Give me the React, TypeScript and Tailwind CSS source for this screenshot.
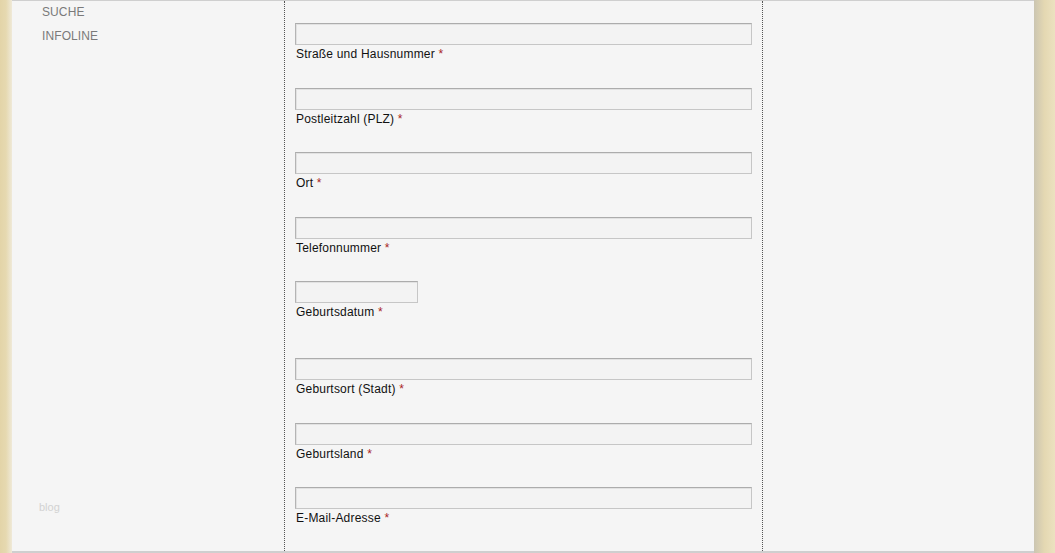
import React from "react";

type Field = { label: string; wrap: string; input: string };

const fields: Field[] = [
  { label: "Straße und Hausnummer", wrap: "mt-0", input: "w-[457px]" },
  { label: "Postleitzahl (PLZ)", wrap: "mt-[27px]", input: "w-[457px]" },
  { label: "Ort", wrap: "mt-[26px]", input: "w-[457px]" },
  { label: "Telefonnummer", wrap: "mt-[27px]", input: "w-[457px]" },
  { label: "Geburtsdatum", wrap: "mt-[26px]", input: "w-[123px]" },
  { label: "Geburtsort (Stadt)", wrap: "mt-[39px]", input: "w-[457px]" },
  { label: "Geburtsland", wrap: "mt-[27px]", input: "w-[457px]" },
  { label: "E-Mail-Adresse", wrap: "mt-[26px]", input: "w-[457px]" },
];

export default function App() {
  return (
    <div
      className="flex h-[553px] w-full overflow-hidden bg-[#e8dcb6]"
      style={{ fontFamily: '"Liberation Sans", Arial, sans-serif' }}
    >
      <div className="w-[12px] shrink-0 bg-gradient-to-r from-[#e3d4a8] via-[#e6d9b0] to-[#efe9d8]" />
      <div className="flex flex-1 border-t border-b-2 border-[#cfcfcf] bg-[#f5f5f5]">
        <div className="flex w-[272px] shrink-0 flex-col">
          <nav className="-mt-[1px] flex flex-col pl-[30px] text-[12px] leading-[24px] tracking-[0.1px] text-[#7a7a7a]">
            <span>SUCHE</span>
            <span>INFOLINE</span>
          </nav>
          <div className="mt-auto mb-[37px] pl-[27px] text-[11px] leading-[13px] text-[#d2d2d2]">
            blog
          </div>
        </div>
        <div className="w-[479px] shrink-0 border-x border-dotted border-[#555555] px-[10px] pt-[22px]">
          {fields.map((f) => (
            <div key={f.label} className={f.wrap}>
              <input
                type="text"
                className={`block h-[22px] ${f.input} border border-[#c6c6c6] border-t-[#acacac] border-l-[#b4b4b4] bg-[#f3f3f3] shadow-[inset_1px_1px_0_#e2e2e2] outline-none`}
              />
              <div className="mt-[2px] pl-[1px] text-[12px] leading-[14px] tracking-[0.2px] text-[#111111]">
                {f.label} <span className="text-[#a82424]">*</span>
              </div>
            </div>
          ))}
        </div>
        <div className="flex-1" />
      </div>
      <div className="w-[21px] shrink-0 bg-gradient-to-r from-[#cbc5b1] via-[#e4d8b2] to-[#ece2c0]" />
    </div>
  );
}
